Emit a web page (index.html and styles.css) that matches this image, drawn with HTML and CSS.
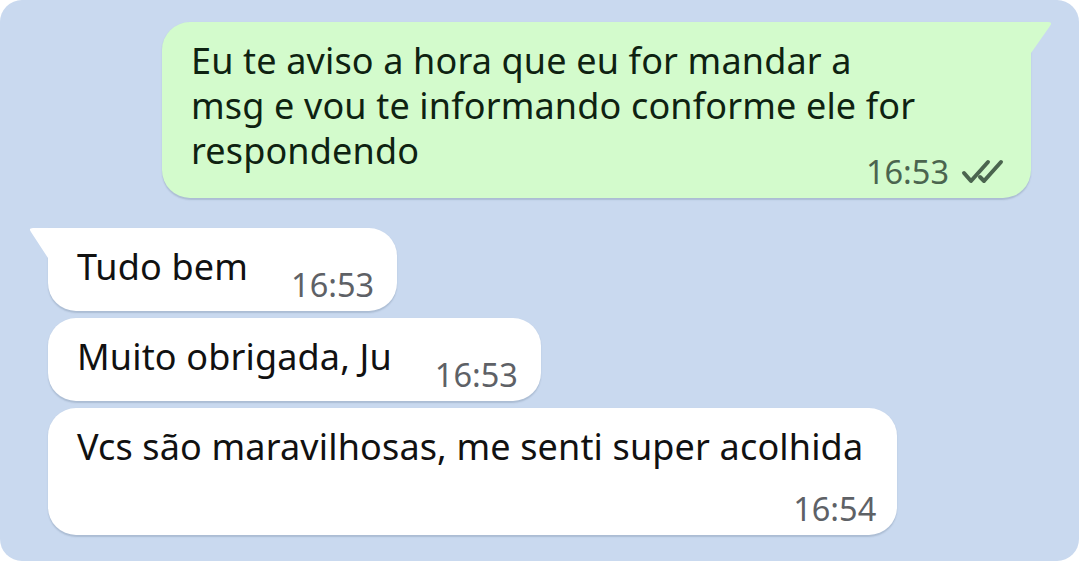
FILE: index.html
```html
<!DOCTYPE html>
<html lang="pt-BR">
<head>
<meta charset="utf-8">
<title>Conversa</title>
<link rel="stylesheet" href="styles.css">
</head>
<body>
<main class="chat">
  <div class="bubble out">
    <p class="text">Eu te aviso a hora que eu for mandar a<br>msg e vou te informando conforme ele for<br>respondendo</p>
    <div class="meta">
      <span class="time">16:53</span>
      <svg class="ticks" width="44" height="26" viewBox="0 0 44 26" aria-hidden="true">
        <path d="M3 14 L10 22 L27 3"/>
        <path d="M19 18 L23 22 L40 3"/>
      </svg>
    </div>
  </div>

  <div class="bubble in first inline">
    <p class="text">Tudo bem</p>
    <div class="meta"><span class="time">16:53</span></div>
  </div>

  <div class="bubble in inline">
    <p class="text">Muito obrigada, Ju</p>
    <div class="meta"><span class="time">16:53</span></div>
  </div>

  <div class="bubble in stacked">
    <p class="text">Vcs são maravilhosas, me senti super acolhida</p>
    <div class="meta"><span class="time">16:54</span></div>
  </div>
</main>
</body>
</html>
```
FILE: styles.css
```css
html, body {
  margin: 0;
  background: #ffffff;
}

.chat {
  box-sizing: border-box;
  width: 1079px;
  height: 561px;
  padding: 22px 48px;
  display: flex;
  flex-direction: column;
  align-items: flex-start;
  background: #c9d9ef;
  border-radius: 22px;
  font-family: "Noto Sans", "Open Sans", sans-serif;
}

.bubble {
  position: relative;
  box-sizing: border-box;
  border-radius: 28px;
  box-shadow: 0 1.5px 1.5px rgba(40, 60, 90, 0.18);
}

.text {
  margin: 0;
  font-size: 36px;
  letter-spacing: 0.15px;
  line-height: 45px;
  white-space: nowrap;
}

.meta {
  display: flex;
  align-items: center;
  gap: 12px;
}

.time {
  font-size: 32.5px;
  line-height: 36px;
  white-space: nowrap;
}

/* outgoing message: green, tail on the top-right corner */
.out {
  align-self: flex-end;
  width: 869px;
  padding: 16px 26px 8px 29px;
  display: grid;
  background: #d3fbcc;
  border-top-right-radius: 0;
}

.out .text,
.out .meta {
  grid-area: 1 / 1;
}

.out .text {
  color: #0e2211;
  margin-bottom: 17px;
}

.out .meta {
  justify-self: end;
  align-self: end;
}

.out .time {
  color: #4b654f;
}

.ticks {
  display: block;
  fill: none;
  stroke: #4b654f;
  stroke-width: 4;
  stroke-linecap: round;
  stroke-linejoin: round;
}

.out::after {
  content: "";
  position: absolute;
  top: 0;
  left: 100%;
  width: 22px;
  height: 32px;
  background: #d3fbcc;
  clip-path: path("M0 0 H17 Q22 0 19 4 L0 31 Z");
}

/* incoming messages: white */
.in {
  background: #ffffff;
  margin-top: 7px;
}

.in .text {
  color: #111111;
}

.in .time {
  color: #5e6166;
}

.in.first {
  margin-top: 30px;
  border-top-left-radius: 0;
}

.in.first::before {
  content: "";
  position: absolute;
  top: 0;
  right: 100%;
  width: 20px;
  height: 31px;
  background: #ffffff;
  clip-path: path("M20 0 H5 Q0 0 3 4 L20 30 Z");
}

.inline {
  display: flex;
  align-items: flex-start;
  gap: 43px;
  padding: 16px 23px 8px 29px;
}

.inline .meta {
  margin-top: 23px;
}

.stacked {
  display: flex;
  flex-direction: column;
  padding: 16px 34px 8px 29px;
}

.stacked .meta {
  align-self: flex-end;
  margin-top: 22px;
  margin-right: -13px;
}
```
